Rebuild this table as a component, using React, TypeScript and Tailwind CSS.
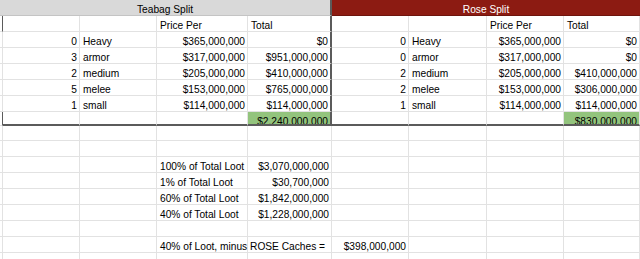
import React from "react";
import clsx from "clsx";

const W = [
  "w-[3px]",
  "w-[77px]",
  "w-[77px]",
  "w-[91px]",
  "w-[84px]",
  "w-[77px]",
  "w-[78px]",
  "w-[77px]",
  "w-[76px]",
];

type Cell = { t?: string; r?: boolean; rc?: string; bc?: string; c?: string };

const DARK_R = "border-r-2 border-r-[#5b5b5b]";
const DARK_R1 = "border-r border-r-[#5b5b5b]";
const DARK_B = "border-b-2 border-b-[#5b5b5b]";

function Row({ h, cells }: { h: string; cells: Cell[] }) {
  return (
    <div className={clsx("flex shrink-0", h)}>
      {W.map((w, i) => {
        const cell = cells[i] ?? {};
        return (
          <div
            key={i}
            className={clsx(
              w,
              "shrink-0 box-border whitespace-nowrap pt-[2px] leading-[15px]",
              i === 0 ? "" : "pl-[3px] pr-[2px]",
              cell.rc ?? "border-r border-r-[#e2e2e2]",
              cell.bc ?? "border-b border-b-[#e2e2e2]",
              cell.r && "text-right",
              cell.c
            )}
          >
            {cell.t ?? ""}
          </div>
        );
      })}
    </div>
  );
}

const teabag = [
  ["0", "Heavy", "$365,000,000", "$0"],
  ["3", "armor", "$317,000,000", "$951,000,000"],
  ["2", "medium", "$205,000,000", "$410,000,000"],
  ["5", "melee", "$153,000,000", "$765,000,000"],
  ["1", "small", "$114,000,000", "$114,000,000"],
];
const rose = [
  ["0", "Heavy", "$365,000,000", "$0"],
  ["0", "armor", "$317,000,000", "$0"],
  ["2", "medium", "$205,000,000", "$410,000,000"],
  ["2", "melee", "$153,000,000", "$306,000,000"],
  ["1", "small", "$114,000,000", "$114,000,000"],
];

const loot = [
  ["100% of Total Loot", "$3,070,000,000"],
  ["1% of Total Loot", "$30,700,000"],
  ["60% of Total Loot", "$1,842,000,000"],
  ["40% of Total Loot", "$1,228,000,000"],
];

export default function App() {
  return (
    <div className="w-[640px] h-[259px] overflow-hidden bg-white text-black text-[10.2px] font-['Liberation_Sans',Arial,sans-serif] flex flex-col">
      {/* header */}
      <div className="flex h-[16px] shrink-0">
        <div className="w-[332px] shrink-0 box-border bg-[#d9d9d9] border-b border-b-[#c4c4c4] border-r-2 border-r-[#5b5b5b] text-center pt-[2px] leading-[15px]">
          Teabag Split
        </div>
        <div className="w-[308px] shrink-0 box-border bg-[#8c1b12] border-b border-b-[#6e140d] text-white text-center pt-[2px] leading-[15px]">
          Rose Split
        </div>
      </div>

      <Row
        h="h-[16px]"
        cells={[
          { rc: DARK_R1 },
          {},
          {},
          { t: "Price Per" },
          { t: "Total", rc: DARK_R },
          {},
          {},
          { t: "Price Per" },
          { t: "Total" },
        ]}
      />

      {teabag.map((tb, k) => {
        const rs = rose[k];
        return (
          <Row
            key={k}
            h="h-[16px]"
            cells={[
              {},
              { t: tb[0], r: true },
              { t: tb[1] },
              { t: tb[2], r: true },
              { t: tb[3], r: true, rc: DARK_R },
              { t: rs[0], r: true },
              { t: rs[1] },
              { t: rs[2], r: true },
              { t: rs[3], r: true },
            ]}
          />
        );
      })}

      {/* totals */}
      <Row
        h="h-[14px]"
        cells={[
          { rc: DARK_R1 },
          { bc: DARK_B },
          { bc: DARK_B },
          { bc: DARK_B },
          { t: "$2,240,000,000", r: true, rc: DARK_R, bc: DARK_B, c: "bg-[#93c47d] overflow-hidden" },
          { bc: DARK_B },
          { bc: DARK_B },
          { bc: DARK_B },
          { t: "$830,000,000", r: true, bc: DARK_B, c: "bg-[#93c47d] overflow-hidden" },
        ]}
      />

      <Row h="h-[15px]" cells={[]} />
      <Row h="h-[16px]" cells={[]} />

      {loot.map((l, k) => (
        <Row
          key={k}
          h="h-[16px]"
          cells={[{}, {}, {}, { t: l[0] }, { t: l[1], r: true }]}
        />
      ))}

      <Row h="h-[16px]" cells={[]} />
      <Row
        h="h-[16px]"
        cells={[
          {},
          {},
          {},
          { t: "40% of Loot, minus ROSE Caches =" },
          {},
          { t: "$398,000,000", r: true },
        ]}
      />
      <Row h="h-[16px]" cells={[]} />
    </div>
  );
}
